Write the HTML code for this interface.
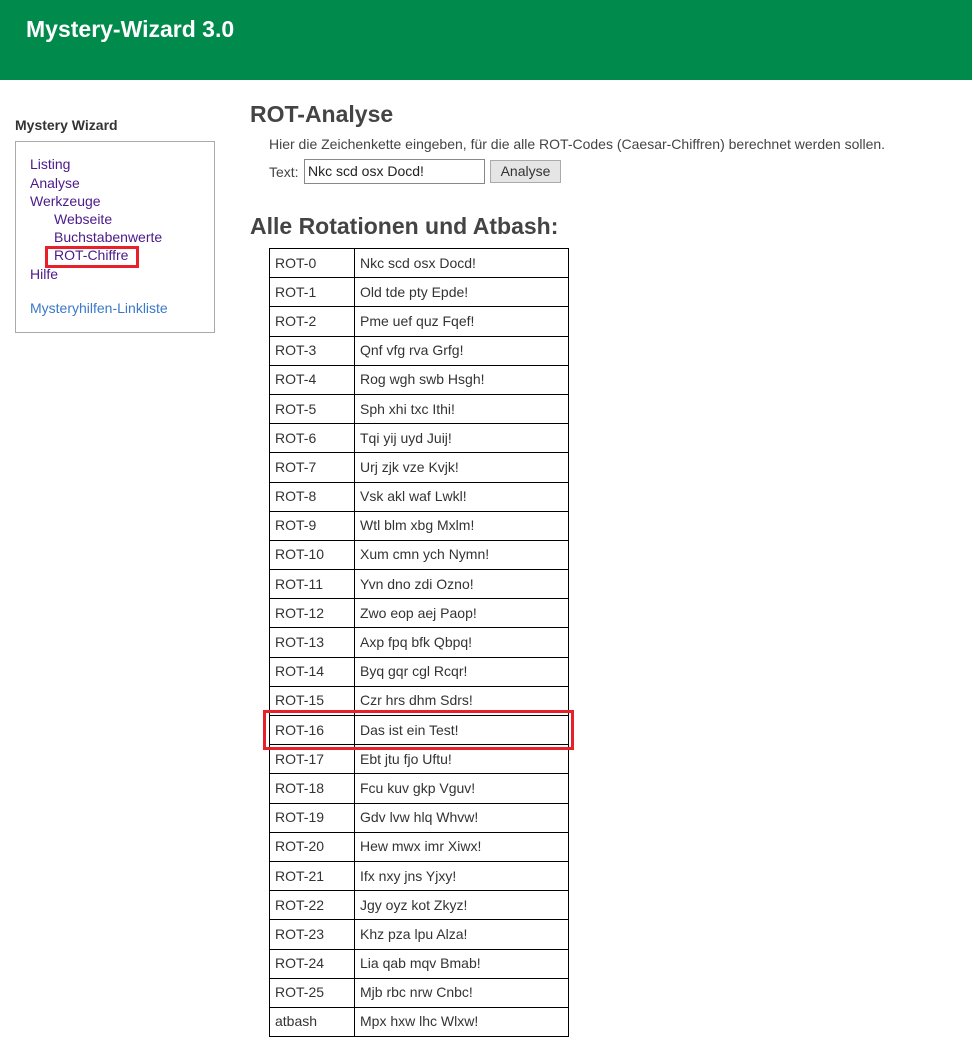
<!DOCTYPE html>
<html><head><meta charset="utf-8"><style>
*{box-sizing:border-box}
body{margin:0;width:972px;height:1054px;background:#fff;font-family:"Liberation Sans",sans-serif;color:#444;position:relative;overflow:hidden}
.hdr{position:absolute;left:0;top:0;width:972px;height:80px;background:#008a4c}
.hdr h1{position:absolute;left:26px;top:16px;margin:0;font-size:23px;color:#fff;font-weight:bold}
.side-t{position:absolute;left:15px;top:117px;font-size:14px;font-weight:bold;color:#333}
.box{position:absolute;left:15px;top:141px;width:200px;height:192px;border:1px solid #aaa}
.box a{position:absolute;font-size:14px;color:#4b1a8a;text-decoration:none;white-space:nowrap}
h2{position:absolute;margin:0;font-weight:bold;color:#444}
.p{position:absolute;left:269px;top:136px;font-size:14px}
.tbl{position:absolute;left:269px;top:248px;border-collapse:collapse;font-size:14px;color:#333}
.tbl td{border:1px solid #000;height:29.2px;padding:0 5px;line-height:27px}
.tbl td:first-child{width:85px}
.tbl td:last-child{width:214px}
.red{position:absolute;border:3px solid #e8202a}
</style></head><body>
<div class="hdr"><h1>Mystery-Wizard 3.0</h1></div>
<div class="side-t">Mystery Wizard</div>
<div class="box">
<a style="left:14px;top:14px">Listing</a>
<a style="left:14px;top:33px">Analyse</a>
<a style="left:14px;top:51px">Werkzeuge</a>
<a style="left:38px;top:69px">Webseite</a>
<a style="left:38px;top:87px">Buchstabenwerte</a>
<a style="left:38px;top:105px">ROT-Chiffre</a>
<a style="left:14px;top:124px">Hilfe</a>
<a style="left:14px;top:158px;color:#3a78c9">Mysteryhilfen-Linkliste</a>
</div>
<div class="red" style="left:45px;top:246px;width:94px;height:22px"></div>
<h2 style="left:250px;top:101px;font-size:23px">ROT-Analyse</h2>
<div class="p">Hier die Zeichenkette eingeben, für die alle ROT-Codes (Caesar-Chiffren) berechnet werden sollen.</div>
<div class="p" style="top:164px">Text:</div>
<div style="position:absolute;left:304px;top:159px;width:181px;height:25px;border:1px solid #888;font-size:14px;padding:3px 3px;color:#222">Nkc scd osx Docd!</div>
<div style="position:absolute;left:490px;top:160px;width:71px;height:23px;border:1px solid #aaa;background:#e5e5e5;font-size:14px;text-align:center;line-height:21px;color:#333">Analyse</div>
<h2 style="left:250px;top:213px;font-size:23px">Alle Rotationen und Atbash:</h2>
<table class="tbl">
<tr><td>ROT-0</td><td>Nkc scd osx Docd!</td></tr>
<tr><td>ROT-1</td><td>Old tde pty Epde!</td></tr>
<tr><td>ROT-2</td><td>Pme uef quz Fqef!</td></tr>
<tr><td>ROT-3</td><td>Qnf vfg rva Grfg!</td></tr>
<tr><td>ROT-4</td><td>Rog wgh swb Hsgh!</td></tr>
<tr><td>ROT-5</td><td>Sph xhi txc Ithi!</td></tr>
<tr><td>ROT-6</td><td>Tqi yij uyd Juij!</td></tr>
<tr><td>ROT-7</td><td>Urj zjk vze Kvjk!</td></tr>
<tr><td>ROT-8</td><td>Vsk akl waf Lwkl!</td></tr>
<tr><td>ROT-9</td><td>Wtl blm xbg Mxlm!</td></tr>
<tr><td>ROT-10</td><td>Xum cmn ych Nymn!</td></tr>
<tr><td>ROT-11</td><td>Yvn dno zdi Ozno!</td></tr>
<tr><td>ROT-12</td><td>Zwo eop aej Paop!</td></tr>
<tr><td>ROT-13</td><td>Axp fpq bfk Qbpq!</td></tr>
<tr><td>ROT-14</td><td>Byq gqr cgl Rcqr!</td></tr>
<tr><td>ROT-15</td><td>Czr hrs dhm Sdrs!</td></tr>
<tr><td>ROT-16</td><td>Das ist ein Test!</td></tr>
<tr><td>ROT-17</td><td>Ebt jtu fjo Uftu!</td></tr>
<tr><td>ROT-18</td><td>Fcu kuv gkp Vguv!</td></tr>
<tr><td>ROT-19</td><td>Gdv lvw hlq Whvw!</td></tr>
<tr><td>ROT-20</td><td>Hew mwx imr Xiwx!</td></tr>
<tr><td>ROT-21</td><td>Ifx nxy jns Yjxy!</td></tr>
<tr><td>ROT-22</td><td>Jgy oyz kot Zkyz!</td></tr>
<tr><td>ROT-23</td><td>Khz pza lpu Alza!</td></tr>
<tr><td>ROT-24</td><td>Lia qab mqv Bmab!</td></tr>
<tr><td>ROT-25</td><td>Mjb rbc nrw Cnbc!</td></tr>
<tr><td>atbash</td><td>Mpx hxw lhc Wlxw!</td></tr>
</table>
<div class="red" style="left:263px;top:710px;width:311px;height:40px"></div>
</body></html>
